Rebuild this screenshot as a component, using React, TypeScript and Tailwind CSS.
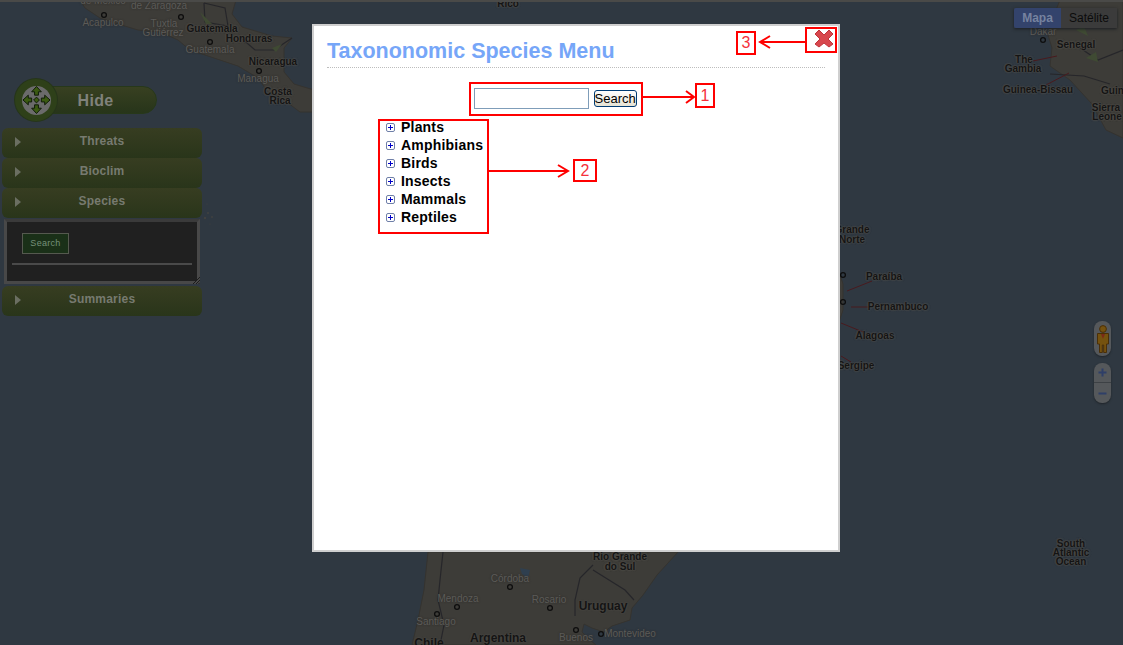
import { Fragment } from "react";

const sans = "font-['Liberation_Sans',Arial,sans-serif]";

// labels sit on the map canvas, so their place is the content
const mapLabels = [
  { t: "de México", c: "left-[103px] top-[-4px]", k: "city" },
  { t: "de Zaragoza", c: "left-[159px] top-[1px]", k: "city" },
  { t: "Acapulco", c: "left-[103px] top-[18px]", k: "city" },
  { t: "Tuxtla", c: "left-[164px] top-[19px]", k: "city" },
  { t: "Gutiérrez", c: "left-[163px] top-[28px]", k: "city" },
  { t: "Guatemala", c: "left-[212px] top-[24px]", k: "land" },
  { t: "Guatemala", c: "left-[210px] top-[45px]", k: "city" },
  { t: "Honduras", c: "left-[249px] top-[34px]", k: "land" },
  { t: "Nicaragua", c: "left-[273px] top-[57px]", k: "land" },
  { t: "Managua", c: "left-[258px] top-[74px]", k: "city" },
  { t: "Costa", c: "left-[278px] top-[87px]", k: "land" },
  { t: "Rica", c: "left-[280px] top-[96px]", k: "land" },
  { t: "Rico", c: "left-[508px] top-[-1px]", k: "land" },
  { t: "Dakar", c: "left-[1043px] top-[27px]", k: "city" },
  { t: "Senegal", c: "left-[1076px] top-[40px]", k: "land" },
  { t: "The", c: "left-[1024px] top-[55px]", k: "land" },
  { t: "Gambia", c: "left-[1023px] top-[64px]", k: "land" },
  { t: "Guinea-Bissau", c: "left-[1038px] top-[85px]", k: "land" },
  { t: "Guinea", c: "left-[1118px] top-[86px]", k: "land" },
  { t: "Sierra", c: "left-[1106px] top-[103px]", k: "land" },
  { t: "Leone", c: "left-[1107px] top-[112px]", k: "land" },
  { t: "Grande", c: "left-[852px] top-[225px]", k: "land" },
  { t: "Norte", c: "left-[852px] top-[235px]", k: "land" },
  { t: "Paraíba", c: "left-[884px] top-[272px]", k: "land" },
  { t: "Pernambuco", c: "left-[898px] top-[302px]", k: "land" },
  { t: "Alagoas", c: "left-[875px] top-[331px]", k: "land" },
  { t: "Sergipe", c: "left-[856px] top-[361px]", k: "land" },
  { t: "South", c: "left-[1071px] top-[539px]", k: "land" },
  { t: "Atlantic", c: "left-[1071px] top-[548px]", k: "land" },
  { t: "Ocean", c: "left-[1071px] top-[557px]", k: "land" },
  { t: "Rio Grande", c: "left-[620px] top-[552px]", k: "land" },
  { t: "do Sul", c: "left-[620px] top-[562px]", k: "land" },
  { t: "Córdoba", c: "left-[510px] top-[574px]", k: "city" },
  { t: "Mendoza", c: "left-[458px] top-[594px]", k: "city" },
  { t: "Rosario", c: "left-[549px] top-[595px]", k: "city" },
  { t: "Santiago", c: "left-[436px] top-[617px]", k: "city" },
  { t: "Buenos", c: "left-[576px] top-[633px]", k: "city" },
  { t: "Montevideo", c: "left-[630px] top-[629px]", k: "city" },
];

const bigLabels = [
  { t: "Uruguay", c: "left-[603px] top-[598px]" },
  { t: "Argentina", c: "left-[498px] top-[630px]" },
  { t: "Chile", c: "left-[429px] top-[635px]" },
];

const cities = [
  [104, 15], [181, 17], [210, 42], [259, 71], [1043, 40], [510, 587], [457, 607], [437, 614],
  [550, 608], [576, 630], [601, 634], [843, 275], [843, 302],
];

const leaders = [
  "M1033 61 L1057 56", "M1046 85 L1069 73", "M847 291 L872 281", "M851 307 L868 307",
  "M841 323 L863 332", "M841 356 L851 362",
];

function MapBackground() {
  return (
    <svg className="absolute inset-0" width="1123" height="645" viewBox="0 0 1123 645">
      <g fill="#3d3c38" stroke="#35332f" strokeWidth="1">
        <path d="M80 0 L85 8 L100 18 L118 24 L138 30 L160 32 L178 40 L190 50 L214 58 L238 66 L258 78 L268 92 L284 100 L300 112 L314 112 L314 90 L294 84 L284 72 L284 48 L292 38 L272 36 L242 27 L232 14 L236 0 Z" />
        <path d="M1060 0 L1052 20 L1048 35 L1052 48 L1050 66 L1070 80 L1092 104 L1106 130 L1123 138 L1123 0 Z" />
        <path d="M412 645 L418 620 L424 590 L428 552 L678 552 L657 575 L643 595 L632 608 L630 620 L612 626 L604 632 L592 628 L584 624 L582 632 L590 640 L596 645 Z" />
        <path d="M839 272 L843 284 L843 310 L839 322 Z" />
      </g>
      <g fill="none" stroke="#26262a" strokeWidth="1.2">
        <path d="M204 3 L205 22 L228 26 L225 8 L204 3 M240 37 L255 50 L274 50 L292 38 M443 552 L440 580 L438 600 L444 625 L440 645" />
        <path d="M593 565 L580 578 L575 600 L575 616 M593 570 L625 590 L634 600 M1080 48 L1098 60 L1123 50 M1050 74 L1084 76 L1110 84" />
      </g>
      <g fill="#3f4a33">
        <path d="M200 12 L206 24 L212 24 Z" />
        <path d="M272 48 L282 44 L276 52 Z" />
        <path d="M1076 30 L1088 36 L1084 26 Z" />
        <path d="M1086 58 L1096 52 L1098 62 Z" />
      </g>
      <path d="M520 568 L530 570 L528 578 L522 574 Z" fill="#2f3f4f" />
      <g fill="#424240">
        <circle cx="207" cy="204" r="0.6" />
        <circle cx="208" cy="213" r="1" />
        <circle cx="212" cy="217" r="0.9" />
        <circle cx="205" cy="218" r="1.2" />
        <circle cx="210" cy="224" r="0.6" />
      </g>
      <g fill="none" stroke="#491a1e" strokeWidth="1">
        {leaders.map((d) => (
          <path key={d} d={d} />
        ))}
      </g>
      <g fill="none" stroke="#0e0e0e" strokeWidth="1.3">
        {cities.map(([cx, cy]) => (
          <circle key={`${cx}-${cy}`} cx={cx} cy={cy} r="2.4" />
        ))}
      </g>
    </svg>
  );
}

function MapLabels() {
  return (
    <>
      {mapLabels.map((l) => (
        <span
          key={l.t + l.c}
          className={`absolute -translate-x-1/2 whitespace-nowrap text-[10px] leading-[9px] ${sans} ${l.c} ${
            l.k === "land"
              ? "font-bold text-[#141414] [text-shadow:0_0_2px_#55524d,0_0_2px_#55524d]"
              : "text-[#5c5b58] [text-shadow:0_0_2px_#2b2a28]"
          }`}
        >
          {l.t}
        </span>
      ))}
      {bigLabels.map((l) => (
        <span
          key={l.t}
          className={`absolute -translate-x-1/2 whitespace-nowrap text-[12px] leading-4 font-bold text-[#141414] [text-shadow:0_0_2px_#55524d] ${sans} ${l.c}`}
        >
          {l.t}
        </span>
      ))}
    </>
  );
}

function AccordionHeader({ label }: { label: string }) {
  return (
    <div className="relative flex h-[30px] w-[200px] items-center justify-center rounded-[6px] bg-gradient-to-b from-[#373d21] to-[#29351a]">
      <span className="absolute left-[13px] top-[9px] h-0 w-0 border-y-[5px] border-l-[6px] border-y-transparent border-l-[#6b6f62]" />
      <span className={`relative top-[-2px] text-[12px] font-bold tracking-[0.2px] text-[#777a70] ${sans}`}>{label}</span>
    </div>
  );
}

function MoveIcon() {
  return (
    <svg width="30" height="30" viewBox="0 0 30 30">
      <g fill="#3b5a12" stroke="#0f1a08" strokeWidth="1">
        <path d="M15 1 L20 6.5 L17 6.5 L17 10 L13 10 L13 6.5 L10 6.5 Z" />
        <path d="M15 29 L20 23.5 L17 23.5 L17 20 L13 20 L13 23.5 L10 23.5 Z" />
        <path d="M1 15 L6.5 10 L6.5 13 L10 13 L10 17 L6.5 17 L6.5 20 Z" />
        <path d="M29 15 L23.5 10 L23.5 13 L20 13 L20 17 L23.5 17 L23.5 20 Z" />
        <path d="M15 12 L18 15 L15 18 L12 15 Z" />
      </g>
    </svg>
  );
}

function Sidebar() {
  return (
    <div className="absolute left-[2px] top-[79px] flex w-[200px] flex-col">
      <div className="relative mb-[7px] ml-[13px] flex h-[42px] items-center">
        <div className="absolute left-[0px] top-[0px] flex h-[42px] w-[42px] items-center justify-center rounded-full bg-[#2e4019] shadow-[0_0_0_1px_#26351a]">
          <div className="flex h-[29px] w-[29px] items-center justify-center rounded-full bg-[#6b6b6b]">
            <MoveIcon />
          </div>
        </div>
        <div className="ml-[1px] flex h-[28px] w-[141px] items-center justify-center rounded-[14px] border border-[#27381a] bg-gradient-to-b from-[#384021] to-[#27351a] pl-[18px]">
          <span className={`relative top-[1px] text-[16px] font-bold tracking-[0.3px] text-[#80827b] ${sans}`}>Hide</span>
        </div>
      </div>
      <AccordionHeader label="Threats" />
      <AccordionHeader label="Bioclim" />
      <AccordionHeader label="Species" />
      <div className="relative mx-[2px] mt-[1px] mb-[2px] h-[65px] border-[3px] border-[#484848] border-t-[#3a3a3a] bg-[#202020] px-[5px] pt-[11px]">
        <button className={`ml-[10px] block h-[21px] w-[47px] border border-[#55594f] bg-[#1a3018] text-[9px] tracking-[0.3px] text-[#76907a] ${sans}`}>
          Search
        </button>
        <div className="mt-[9px] h-[2px] bg-[#4a4a4a]" />
        <svg className="absolute bottom-[-3px] right-[-3px]" width="7" height="7" viewBox="0 0 7 7">
          <path d="M0 7 L7 0 M3 7 L7 3 M5.5 7 L7 5.5" stroke="#1c1c1c" strokeWidth="1" />
        </svg>
      </div>
      <AccordionHeader label="Summaries" />
    </div>
  );
}

function MapControls() {
  return (
    <>
      <div className={`absolute left-[1014px] top-[8px] flex h-[20px] text-[12px] shadow-[0_1px_3px_#1a1e22] ${sans}`}>
        <div className="flex w-[47px] items-center justify-center rounded-l-[2px] bg-[#33436c] font-bold text-[#76829f]">Mapa</div>
        <div className="flex w-[56px] items-center justify-center rounded-r-[2px] bg-[#3b3b3b] text-[#0c0c0c]">Satélite</div>
      </div>
      <div className="absolute left-[1094px] top-[321px] flex flex-col items-center gap-[7px]">
        <div className="flex h-[35px] w-[17px] items-center justify-center rounded-[8px] bg-[#55585b] shadow-[0_1px_2px_#1f2429]">
          <svg width="12" height="28" viewBox="0 0 12 28">
            <circle cx="6" cy="4" r="3.4" fill="#75520f" stroke="#4a2f08" />
            <path d="M0.5 8.5 L11.5 8.5 L11.5 19 L9.5 19 L9.5 27.5 L6.7 27.5 L6.7 20 L5.3 20 L5.3 27.5 L2.5 27.5 L2.5 19 L0.5 19 Z" fill="#75520f" stroke="#4a2f08" />
            <path d="M4 9 L8 9 L6 14 Z" fill="#7a2a18" />
          </svg>
        </div>
        <div className="flex h-[40px] w-[17px] flex-col rounded-[8px] bg-[#55585b] shadow-[0_1px_2px_#1f2429]">
          <div className="flex h-[20px] items-center justify-center border-b border-[#3d4145]">
            <svg width="9" height="9" viewBox="0 0 9 9">
              <path d="M4.5 0.5 V8.5 M0.5 4.5 H8.5" stroke="#2f3f68" strokeWidth="2" />
            </svg>
          </div>
          <div className="flex h-[20px] items-center justify-center">
            <svg width="9" height="9" viewBox="0 0 9 9">
              <path d="M0.5 4.5 H8.5" stroke="#2f3f68" strokeWidth="2" />
            </svg>
          </div>
        </div>
      </div>
    </>
  );
}

function PlusBox() {
  return (
    <svg width="9" height="9" viewBox="0 0 9 9" className="shrink-0">
      <rect x="0.5" y="0.5" width="8" height="8" rx="1.5" fill="#fff" stroke="#6f7fa8" />
      <path d="M2 4.5 H7 M4.5 2 V7" stroke="#0000c8" strokeWidth="1" />
    </svg>
  );
}

const taxa = ["Plants", "Amphibians", "Birds", "Insects", "Mammals", "Reptiles"];

function Modal() {
  return (
    <div className={`absolute left-[312px] top-[24px] flex h-[528px] w-[528px] flex-col border-2 border-[#cfcfcf] bg-white ${sans}`}>
      <div className="mx-[13px] mt-[12px] h-[30px] border-b border-dotted border-[#bdbdbd]">
        <h1 className="text-[21.5px] leading-[27px] font-bold text-[#76a6f8]">Taxononomic Species Menu</h1>
      </div>
      <div className="mt-[20px] flex items-center justify-center gap-[5px] pr-[42px]">
        <input className="h-[21px] w-[115px] border border-[#7f9db9] bg-white" />
        <button className="h-[17px] w-[43px] rounded-[3px] border border-[#003c74] bg-gradient-to-b from-white to-[#e6e3d4] text-[13px] leading-[13px] text-black">
          Search
        </button>
      </div>
      <ul className="mt-[9px] ml-[72px] flex flex-col">
        {taxa.map((name) => (
          <li key={name} className="flex h-[18px] items-center gap-[6px]">
            <PlusBox />
            <span className="text-[14px] font-bold tracking-[0.2px] text-black">{name}</span>
          </li>
        ))}
      </ul>
    </div>
  );
}

function Annotations() {
  const boxes = [
    "left-[469px] top-[82px] w-[174px] h-[34px]",
    "left-[378px] top-[119px] w-[111px] h-[115px]",
    "left-[805px] top-[27px] w-[32px] h-[26px]",
  ];
  const tags = [
    { n: "1", c: "left-[695px] top-[83px] w-[20px] h-[25px]" },
    { n: "2", c: "left-[573px] top-[159px] w-[24px] h-[23px]" },
    { n: "3", c: "left-[736px] top-[31px] w-[20px] h-[24px]" },
  ];
  return (
    <Fragment>
      {boxes.map((c) => (
        <div key={c} className={`absolute border-2 border-[#ff0000] ${c}`} />
      ))}
      {tags.map((t) => (
        <div
          key={t.n}
          className={`absolute flex items-center justify-center border-2 border-[#ff0000] bg-white text-[16px] text-[#f5303a] ${sans} ${t.c}`}
        >
          {t.n}
        </div>
      ))}
      <svg className="absolute inset-0 pointer-events-none" width="1123" height="645" viewBox="0 0 1123 645">
        <g fill="none" stroke="#ff0000" strokeWidth="2">
          <path d="M643 97 H693 M686 91 L694 97 L686 103" />
          <path d="M489 171 H567 M558 165 L568 171 L558 177" />
          <path d="M805 42 H760 M770 36 L760 42 L770 48" />
        </g>
        <path
          d="M819 30 L824 35 L829 30 L833 34 L828 39 L833 44 L829 47 L824 43 L819 47 L815 44 L820 39 L815 34 Z"
          fill="#d8474d"
          stroke="#c2333a"
          strokeWidth="1"
        />
      </svg>
    </Fragment>
  );
}

export default function App() {
  return (
    <div className="relative h-[645px] w-[1123px] overflow-hidden bg-[#2f3841]">
      <MapBackground />
      <MapLabels />
      <div className="absolute inset-x-0 top-0 h-[2px] bg-[#4a4a48]" />
      <Sidebar />
      <MapControls />
      <Modal />
      <Annotations />
    </div>
  );
}
